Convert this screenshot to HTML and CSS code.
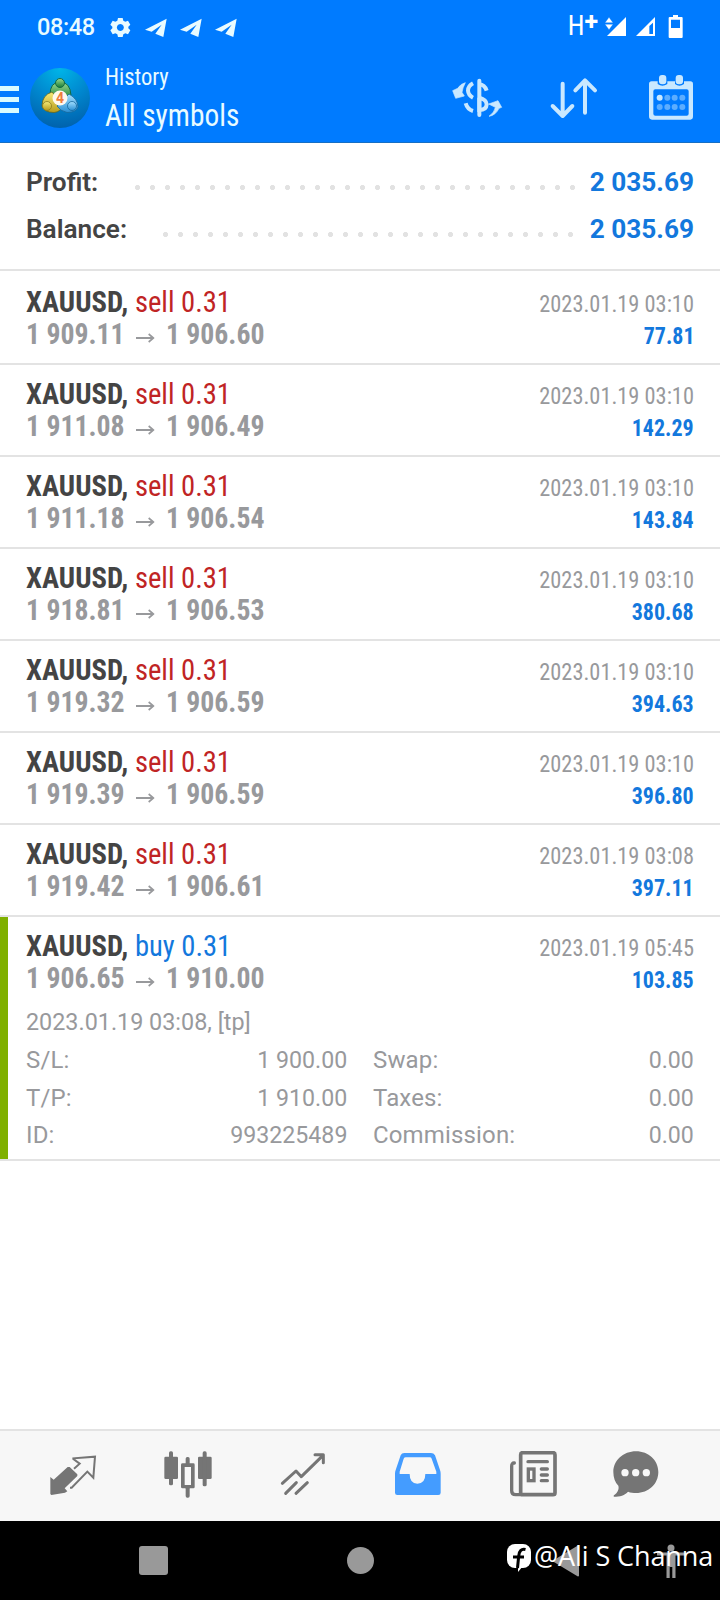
FILE: index.html
```html
<!DOCTYPE html>
<html lang="en">
<head>
<meta charset="utf-8">
<title>History</title>
<link rel="stylesheet" href="styles.css">
</head>
<body>
<div class="screen">
  <header class="top">
    <div class="status">
      <span class="clock">08:48</span>
      <svg class="status-left" viewBox="324 42 396 72">
        <g fill="#e9fbff">
          <path fill-rule="evenodd" d="M354 51h14l2 8 6 3 8-3 7 12-6 6v5l6 6-7 12-8-3-6 3-2 8h-14l-2-8-6-3-8 3-7-12 6-6v-5l-6-6 7-12 8 3 6-3zM361 69a10.500 10.500 0 1 0 .1 0z"/>
          <path id="plane" d="M435 86L500 53L490 108L466 98L485 71L455 92Z"/>
          <use href="#plane" x="105"/><use href="#plane" x="210"/>
        </g>
      </svg>
      <span class="net">H<span class="plus">+</span></span>
      <svg class="status-right" viewBox="513 39 252 81">
        <g fill="#fff">
          <path d="M588 51V108H531Z"/><path d="M537 52l12 16h-24zM525 73h24l-12 16z" stroke="#007bff" stroke-width="1"/>
          <path fill-rule="evenodd" d="M675 51V108H618ZM669 68L658 78V102H669Z"/>
          <path fill-rule="evenodd" d="M729 45h15v6h11q3 0 3 3v57q0 3-3 3h-36q-3 0-3-3V54q0-3 3-3h10zM723 59V84H750V59Z"/>
        </g>
      </svg>
    </div>
    <div class="appbar">
      <div class="menu"><i></i><i></i><i></i></div>
      <svg class="logo" viewBox="0 0 60 60">
        <defs>
          <radialGradient id="disc" cx=".5" cy="0" r="1"><stop offset="0" stop-color="#00b6e8"/><stop offset=".5" stop-color="#0089d0"/><stop offset="1" stop-color="#0062ad"/></radialGradient>
          <linearGradient id="green" x2="0" y2="1"><stop stop-color="#9bdc91"/><stop offset="1" stop-color="#177b35"/></linearGradient>
          <linearGradient id="gold" x2="0" y2="1"><stop stop-color="#f6ea78"/><stop offset="1" stop-color="#b89c1c"/></linearGradient>
          <linearGradient id="sky" x2="0" y2="1"><stop stop-color="#a4e0ff"/><stop offset="1" stop-color="#2a8fd4"/></linearGradient>
        </defs>
        <circle cx="30" cy="30" r="30" fill="url(#disc)"/>
        <path d="M20 27Q20 14 30 14Q40 14 41 27L36 32H22Z" fill="url(#green)" stroke="#126a45"/>
        <path d="M22 24Q12 27 12 38Q14 44.500 24 44.500Q31 44 33 37Z" fill="url(#gold)" stroke="#66671d" stroke-width=".8"/>
        <path d="M39 26Q48 31 48 39Q46 44.500 37 44.500Q30 43 27 38Z" fill="url(#sky)" stroke="#16679a" stroke-width=".8"/>
        <circle cx="30" cy="15" r="4.500" fill="url(#green)" stroke="#126a45"/>
        <circle cx="17" cy="38" r="4.500" fill="url(#gold)" stroke="#8a7a1d" stroke-width=".8"/>
        <circle cx="42" cy="38" r="4.500" fill="url(#sky)" stroke="#16679a" stroke-width=".8"/>
        <circle cx="30" cy="30" r="7.500" fill="#fff8ee"/>
        <text class="four" x="30" y="35" text-anchor="middle">4</text>
      </svg>
      <div class="titles"><div class="sub">History</div><div class="title">All symbols</div></div>
      <div class="actions">
        <svg viewBox="60 211 162 162" fill="none" stroke="#c9e8ff" stroke-width="11">
          <path d="M148 240V343" stroke-width="12" stroke-linecap="round"/>
          <path d="M129 248Q114 256 114 270Q115 284 129 291M107 308Q112 326 129 331M148 251Q164 252 170 270M148 291V328Q169 328 170 311Q169 297 148 291" stroke-width="12"/>
          <path d="M106 246Q92 249 83 263L68 270L77 293L103 286L96 275Q98 261 106 246ZM177 347Q194 335 196 320L176 310L204 300L215 320L207 323Q197 344 177 347Z" fill="#c9e8ff" stroke-width="2" stroke-linejoin="round"/>
        </svg>
        <svg viewBox="352 211 162 162" fill="none" stroke="#c9e8ff" stroke-width="12" stroke-linecap="round" stroke-linejoin="round"><path d="M399 249V344M369 316L399 346L428 316M466 336V241M437 269L466 239L496 269"/></svg>
        <svg viewBox="642 211 162 162">
          <path fill="#c9e8ff" fill-rule="evenodd" d="M665 242H683V250Q697 260 712 250V242H735V250Q748 260 762 250V242H781Q789 242 789 250V347Q789 357 781 357H666Q657 357 657 347V250Q657 242 665 242ZM676 266Q670 266 670 272V339Q670 345 676 345H770Q776 345 776 339V272Q776 266 770 266Z"/>
          <g fill="#c9e8ff"><rect x="687" y="223" width="22" height="28" rx="9"/><rect x="737" y="223" width="22" height="28" rx="9"/><circle cx="689" cy="291" r="9"/></g>
          <g fill="#5cadff"><circle cx="712" cy="291" r="9"/><circle cx="734" cy="291" r="9"/><circle cx="757" cy="291" r="9"/><circle cx="689" cy="319" r="9"/><circle cx="712" cy="319" r="9"/><circle cx="734" cy="319" r="9"/><circle cx="757" cy="319" r="9"/></g>
        </svg>
      </div>
    </div>
  </header>

  <section class="summary">
    <div class="total"><b>Profit:</b><i class="dots profit-dots"></i><span>2 035.69</span></div>
    <div class="total"><b>Balance:</b><i class="dots balance-dots"></i><span>2 035.69</span></div>
  </section>

  <main class="deals">
    <article class="deal"><div class="line"><p class="symbol"><b>XAUUSD,</b> <span class="sell">sell 0.31</span></p><time>2023.01.19 03:10</time></div><div class="line"><p class="prices"><span>1 909.11</span><svg class="arrow" viewBox="0 0 20 10"><path d="M0 5H18M13.500 1L18.500 5L13.500 9"/></svg><span>1 906.60</span></p><strong>77.81</strong></div></article>
    <article class="deal"><div class="line"><p class="symbol"><b>XAUUSD,</b> <span class="sell">sell 0.31</span></p><time>2023.01.19 03:10</time></div><div class="line"><p class="prices"><span>1 911.08</span><svg class="arrow" viewBox="0 0 20 10"><path d="M0 5H18M13.500 1L18.500 5L13.500 9"/></svg><span>1 906.49</span></p><strong>142.29</strong></div></article>
    <article class="deal"><div class="line"><p class="symbol"><b>XAUUSD,</b> <span class="sell">sell 0.31</span></p><time>2023.01.19 03:10</time></div><div class="line"><p class="prices"><span>1 911.18</span><svg class="arrow" viewBox="0 0 20 10"><path d="M0 5H18M13.500 1L18.500 5L13.500 9"/></svg><span>1 906.54</span></p><strong>143.84</strong></div></article>
    <article class="deal"><div class="line"><p class="symbol"><b>XAUUSD,</b> <span class="sell">sell 0.31</span></p><time>2023.01.19 03:10</time></div><div class="line"><p class="prices"><span>1 918.81</span><svg class="arrow" viewBox="0 0 20 10"><path d="M0 5H18M13.500 1L18.500 5L13.500 9"/></svg><span>1 906.53</span></p><strong>380.68</strong></div></article>
    <article class="deal"><div class="line"><p class="symbol"><b>XAUUSD,</b> <span class="sell">sell 0.31</span></p><time>2023.01.19 03:10</time></div><div class="line"><p class="prices"><span>1 919.32</span><svg class="arrow" viewBox="0 0 20 10"><path d="M0 5H18M13.500 1L18.500 5L13.500 9"/></svg><span>1 906.59</span></p><strong>394.63</strong></div></article>
    <article class="deal"><div class="line"><p class="symbol"><b>XAUUSD,</b> <span class="sell">sell 0.31</span></p><time>2023.01.19 03:10</time></div><div class="line"><p class="prices"><span>1 919.39</span><svg class="arrow" viewBox="0 0 20 10"><path d="M0 5H18M13.500 1L18.500 5L13.500 9"/></svg><span>1 906.59</span></p><strong>396.80</strong></div></article>
    <article class="deal"><div class="line"><p class="symbol"><b>XAUUSD,</b> <span class="sell">sell 0.31</span></p><time>2023.01.19 03:08</time></div><div class="line"><p class="prices"><span>1 919.42</span><svg class="arrow" viewBox="0 0 20 10"><path d="M0 5H18M13.500 1L18.500 5L13.500 9"/></svg><span>1 906.61</span></p><strong>397.11</strong></div></article>
    <article class="deal open">
      <div class="line"><p class="symbol"><b>XAUUSD,</b> <span class="buy">buy 0.31</span></p><time>2023.01.19 05:45</time></div><div class="line"><p class="prices"><span>1 906.65</span><svg class="arrow" viewBox="0 0 20 10"><path d="M0 5H18M13.500 1L18.500 5L13.500 9"/></svg><span>1 910.00</span></p><strong>103.85</strong></div>
      <div class="opened"><span>2023.01.19 03:08, [tp]</span></div>
      <div class="details">
        <div><span>S/L:</span><span class="value">1 900.00</span></div><div><span>Swap:</span><span class="value">0.00</span></div>
        <div><span>T/P:</span><span class="value">1 910.00</span></div><div><span>Taxes:</span><span class="value">0.00</span></div>
        <div><span>ID:</span><span class="value">993225489</span></div><div><span>Commission:</span><span class="value">0.00</span></div>
      </div>
    </article>
  </main>

  <nav class="tabs">
    <svg viewBox="143 93 150 150"><path fill="#757575" d="M150 171L160 179L202 141H208L231 163V168L193 205L201 214L194 218L153 225L150 222Z"/><path fill="none" stroke="#757575" stroke-width="6" d="M221 146L238 131L219 117V115L284 110L279 173L261 155L214 203H209"/></svg>
    <svg viewBox="488 93 150 150"><g fill="#757575"><rect x="492" y="110" width="41" height="67" rx="4"/><rect x="506" y="94" width="12" height="102" rx="5"/><rect x="593" y="110" width="41" height="67" rx="4"/><rect x="607" y="94" width="12" height="105" rx="5"/><rect x="556" y="111" width="12" height="25" rx="5"/><rect x="556" y="200" width="12" height="33" rx="5"/><path fill-rule="evenodd" d="M547 130H579Q583 130 583 134V201Q583 205 579 205H547Q542 205 542 201V134Q542 130 547 130ZM553 141V195H572V141Z"/></g></svg>
    <svg viewBox="832 93 150 150"><path fill="none" stroke="#757575" stroke-width="9" stroke-linecap="round" stroke-linejoin="round" d="M845 190L886 153L902 170L967 106M943 104H968V128M855 220L887 188M886 220L920 188"/></svg>
    <svg viewBox="99 93 150 150"><path fill="#449cff" fill-rule="evenodd" d="M133 99H213Q221 99 225 106L240 150Q242 155 242 161V218Q242 225 235 225H112Q105 225 105 218V161Q105 155 107 150L122 106Q125 99 133 99ZM137 112Q133 112 131 116L119 155V162H149Q149 191 172 191Q196 191 196 162H229V155L215 116Q214 112 209 112Z"/></svg>
    <svg viewBox="444 93 150 150"><g fill="none" stroke="#757575"><rect x="482" y="98" width="103" height="126" rx="6" stroke-width="11"/><path d="M463 129Q455 128 455 139V212Q455 224 467 224H485" stroke-width="10" stroke-linecap="round"/><path d="M504 125H562M544 147H562M544 165H562M544 182H562" stroke-width="10" stroke-linecap="round"/><rect x="505" y="147" width="17" height="35" stroke-width="10"/></g></svg>
    <svg viewBox="754 93 150 150"><path fill="#757575" d="M829 94C867 94 896 121 896 156C896 192 867 219 829 219C821 219 813 218 805 215C796 226 780 230 763 230Q760 229 763 226C774 218 779 207 776 197C766 187 761 173 761 156C761 121 791 94 829 94Z"/><g fill="#f7f7f7"><circle cx="796" cy="158" r="11"/><circle cx="828" cy="158" r="11"/><circle cx="860" cy="158" r="11"/></g></svg>
  </nav>
  <footer class="system">
    <i class="square"></i><i class="circle"></i>
    <svg class="back" viewBox="0 0 28 32"><path d="M26 1.500V30.500L2 16Z"/></svg>
    <svg class="person" viewBox="0 0 32 34"><circle cx="16" cy="4" r="3.500"/><path d="M2 8.500H30V11.500H20.500V34H17.300V23H14.700V34H11.500V11.500H2Z"/></svg>
    <div class="watermark">
      <svg viewBox="0 0 24 28"><rect width="24" height="24" rx="8" fill="#fff"/><path d="M11 28L16 22H11Z" fill="#fff"/><path d="M18.500 5.500Q12.500 4 11.700 12L10.500 24M6 13H17" stroke="#000" stroke-width="3" fill="none"/></svg>
      <span>@Ali S Channa</span>
    </div>
  </footer>
</div>
</body>
</html>
```
FILE: styles.css
```css
* { box-sizing: border-box; }
body { margin: 0; background: #fff; font-family: Roboto, "Liberation Sans", sans-serif; }
p { margin: 0; }
svg { display: block; flex: none; }
.screen { width: 720px; height: 1600px; display: flex; flex-direction: column; overflow: hidden; }

.top { height: 143px; background: #007bff; border-bottom: 1px solid #176fc4; color: #e9fbff; flex: none; }
.status { height: 53px; display: flex; align-items: center; padding: 0 35px 0 37px; }
.clock { width: 71px; font-size: 23.500px; font-weight: 500; line-height: 54px; letter-spacing: -.4px; }
.status-left { width: 132px; height: 24px; }
.net { margin-left: auto; display: flex; font-size: 27px; font-stretch: 75%; line-height: 53px; color: #fff; }
.plus { font-size: 25px; font-weight: 700; line-height: 43px; font-stretch: 100%; }
.status-right { width: 84px; height: 27px; margin-left: 3px; }
.appbar { height: 89px; display: flex; align-items: center; padding-right: 22px; }
.menu { width: 30px; display: flex; flex-direction: column; gap: 6.500px; padding-top: 4px; }
.menu i { width: 19px; height: 4.600px; background: #d9fbff; }
.logo { width: 60px; height: 60px; }
.four { font-size: 14px; font-weight: 700; fill: #ee7e3c; }
.titles { padding: 1px 0 0 15px; font-stretch: 75%; white-space: nowrap; }
.sub, .title { transform-origin: left; }
.sub { font-size: 24px; line-height: 34px; transform: scaleX(.94); }
.title { font-size: 32px; line-height: 42px; transform: scaleX(.918); }
.actions { margin-left: auto; display: flex; gap: 43px; }
.actions svg { width: 54px; height: 54px; }

.summary { height: 128px; padding: 15px 26px 0; border-bottom: 2px solid #e3e3e3; flex: none; }
.total { height: 47px; display: flex; align-items: center; justify-content: space-between; font-size: 26.200px; color: #444; }
.total b { font-weight: 600; }
.total span { color: #1378dd; font-weight: 700; }
.dots { height: 5px; margin: 12px 12px 0 auto; background: radial-gradient(circle at 50% 50%, #e2e2e2 2.200px, transparent 2.900px) right / 15px 5px; }
.profit-dots { width: 450px; margin-right: 10px; }
.balance-dots { width: 420px; }

.deals { flex: 1; padding-top: 2px; }
.deal { height: 92px; padding: 13px 26px 0; border-bottom: 2px solid #e3e3e3; }
.line { height: 32px; display: flex; justify-content: space-between; align-items: baseline; font-stretch: 75%; line-height: 32px; white-space: nowrap; }
.symbol { font-size: 30px; color: #444; transform: scaleX(.953); transform-origin: left; }
.symbol b { font-weight: 700; }
.sell { color: #c02424; }
.buy { color: #1378dd; }
.line time { font-size: 24px; color: #98999c; transform: scaleX(.932); transform-origin: right; }
.prices { display: flex; align-items: center; font-size: 29.500px; font-weight: 700; color: #98999c; transform: scaleX(.94); transform-origin: left; }
.arrow { width: 20px; height: 10px; margin: 8px 12px 0; fill: none; stroke: #98999c; stroke-width: 1.800; }
.line strong { font-size: 24px; font-weight: 700; color: #1378dd; transform: scaleX(.915); transform-origin: right; }
.open { height: 244px; position: relative; }
.open::before { content: ""; position: absolute; left: 0; top: 0; width: 7.500px; height: 242px; background: #7fb000; }
.opened { padding-top: 9px; font-size: 24px; line-height: 38px; color: #98999c; }
.opened span { display: inline-block; transform: scaleX(.973); transform-origin: left; }
.details { display: grid; grid-template-columns: 321px 321px; column-gap: 26px; padding-top: 1px; font-size: 24px; line-height: 37.500px; color: #98999c; }
.details div { display: flex; justify-content: space-between; letter-spacing: .15px; }
.value { letter-spacing: 0; transform: scaleX(.965); transform-origin: right; }

.tabs { height: 92px; flex: none; background: #f7f7f7; border-top: 2px solid #e3e3e3; display: flex; align-items: center; gap: 65px; padding-left: 47.500px; }
.tabs svg { width: 50px; height: 50px; }
.tabs svg:last-child { margin-left: -12px; }
.system { height: 79px; flex: none; background: #000; display: flex; align-items: center; padding-left: 139px; position: relative; }
.square { width: 29px; height: 29px; border-radius: 3px; background: #999; }
.circle { width: 27px; height: 27px; border-radius: 50%; background: #999; margin-left: 179px; }
.back { width: 28px; height: 32px; margin-left: 178px; fill: #999; stroke: #999; stroke-width: 2; stroke-linejoin: round; }
.person { width: 32px; height: 34px; margin-left: 75px; fill: #999; }
.watermark { position: absolute; left: 507px; top: 23px; display: flex; gap: 3px; color: #fff; font: 27px/27px "Open Sans", sans-serif; white-space: nowrap; }
.watermark svg { width: 24px; height: 28px; }
.watermark span { margin-top: -2px; letter-spacing: -.1px; }
```
